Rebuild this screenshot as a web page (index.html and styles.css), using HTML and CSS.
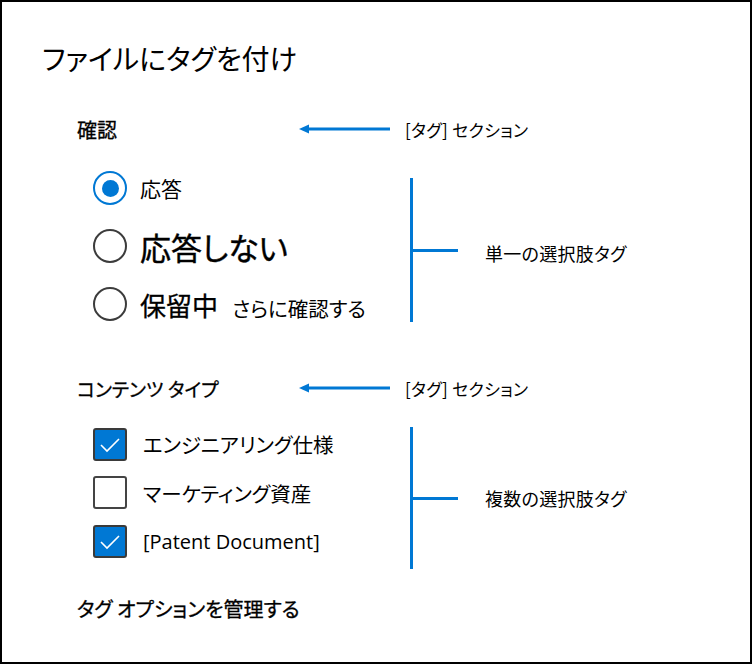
FILE: index.html
```html
<!DOCTYPE html>
<html lang="ja">
<head>
    <meta charset="UTF-8">
    <meta name="viewport" content="width=device-width, initial-scale=1.0">
    <title>ファイルにタグを付け</title>
    <link rel="stylesheet" href="styles.css">
</head>
<body>
    <div class="frame">
        <h1 class="title">ファイルにタグを付け</h1>

        <div class="sectionRow">
            <div class="sectionName">確認</div>
            <div class="arrow">
                <svg width="91" height="10" viewBox="0 0 91 10"><path d="M0 5 L10 0.5 L10 9.5 Z" fill="#0078d4"/><rect x="8" y="3.5" width="83" height="3" fill="#0078d4"/></svg>
            </div>
            <div class="note">[タグ] セクション</div>
        </div>

        <div class="group radioGroup">
            <ul class="options">
                <li class="opt"><span class="radio checked"></span><span class="txtSm">応答</span></li>
                <li class="opt"><span class="radio"></span><span class="txtLg">応答しない</span></li>
                <li class="opt"><span class="radio"></span><span class="txtMd">保留中</span><span class="txtAside">さらに確認する</span></li>
            </ul>
            <div class="bracket"><span class="tick"></span></div>
            <div class="note groupNote">単一の選択肢タグ</div>
        </div>

        <div class="sectionRow sectionSecond">
            <div class="sectionName">コンテンツ タイプ</div>
            <div class="arrow">
                <svg width="91" height="10" viewBox="0 0 91 10"><path d="M0 5 L10 0.5 L10 9.5 Z" fill="#0078d4"/><rect x="8" y="3.5" width="83" height="3" fill="#0078d4"/></svg>
            </div>
            <div class="note">[タグ] セクション</div>
        </div>

        <div class="group checkGroup">
            <ul class="options">
                <li class="opt"><span class="check checked"><svg width="30" height="30" viewBox="0 0 30 30"><polyline points="6,16 12,22 24,10" fill="none" stroke="#fff" stroke-width="1.6"/></svg></span><span class="txtCheck">エンジニアリング仕様</span></li>
                <li class="opt"><span class="check"></span><span class="txtCheck">マーケティング資産</span></li>
                <li class="opt"><span class="check checked"><svg width="30" height="30" viewBox="0 0 30 30"><polyline points="6,16 12,22 24,10" fill="none" stroke="#fff" stroke-width="1.6"/></svg></span><span class="txtCheck latin">[Patent Document]</span></li>
            </ul>
            <div class="bracket tall"><span class="tick"></span></div>
            <div class="note groupNote">複数の選択肢タグ</div>
        </div>

        <div class="manage">タグ オプションを管理する</div>
    </div>
</body>
</html>
```

FILE: styles.css
```css
*{margin: 0; padding: 0; box-sizing: border-box; list-style: none;}
body{background-color: #fff; font-family: "Noto Sans CJK JP", "Noto Sans", sans-serif; font-feature-settings: "palt"; color: #000;}

.frame{width: 752px; height: 664px; border: 2px solid #000; padding: 38px 0 0 40px;}
.title{font-size: 28px; font-weight: 400; line-height: 36px; height: 36px;}

.sectionRow{display: flex; align-items: center; height: 36px; margin-top: 35px; padding-left: 35px;}
.sectionSecond{margin-top: 46px;}
.sectionName{width: 222px; font-size: 20px; font-weight: 400; -webkit-text-stroke: 0.3px #000;}
.sectionSecond .sectionName{font-size: 19px;}
.arrow{width: 91px; height: 10px; display: flex;}
.note{font-size: 17px; font-weight: 400; margin-left: 15px; letter-spacing: 0.3px;}

.group{display: flex; align-items: flex-start; margin-top: 21px; padding-left: 51px;}
.options{width: 317px; display: flex; flex-direction: column;}
.radioGroup .options{gap: 18px;}
.checkGroup .options{gap: 14.5px;}
.opt{display: flex; align-items: center;}
.radioGroup .opt{height: 40px;}
.checkGroup .opt{height: 34px;}

.radio{width: 34px; height: 34px; border: 2px solid #3c3c3c; border-radius: 50%; margin-right: 13px; flex-shrink: 0; display: flex; align-items: center; justify-content: center;}
.radio.checked{border-color: #0078d4;}
.radio.checked::after{content: ""; width: 17px; height: 17px; border-radius: 50%; background-color: #0078d4;}
.txtSm{font-size: 21px;}
.txtLg{font-size: 31px; -webkit-text-stroke: 0.4px #000;}
.txtMd{font-size: 26px; -webkit-text-stroke: 0.3px #000;}
.txtAside{font-size: 20.5px; margin-left: 14px; margin-top: 8px;}

.check{width: 34px; height: 33px; border: 2px solid #444; border-radius: 3px; margin-right: 16px; flex-shrink: 0; display: flex; align-items: center; justify-content: center;}
.check.checked{background-color: #0078d4; border-color: #3a3a3a;}
.txtCheck{font-size: 20.5px;}
.latin{font-family: "Open Sans", "Noto Sans", sans-serif; font-size: 20px;}

.bracket{width: 3px; height: 144px; background-color: #0078d4; margin-top: 10px; display: flex; align-items: center;}
.bracket.tall{height: 142px; margin-top: 0;}
.tick{width: 45px; height: 3px; margin-left: 3px; background-color: #0078d4; flex-shrink: 0;}
.groupNote{font-size: 18px; margin-left: 72px; align-self: center;}
.radioGroup .groupNote{margin-top: 14px;}
.checkGroup .groupNote{margin-top: 0;}

.manage{font-size: 20px; font-weight: 400; -webkit-text-stroke: 0.3px #000; height: 36px; line-height: 36px; margin-top: 22px; padding-left: 35px;}
```
